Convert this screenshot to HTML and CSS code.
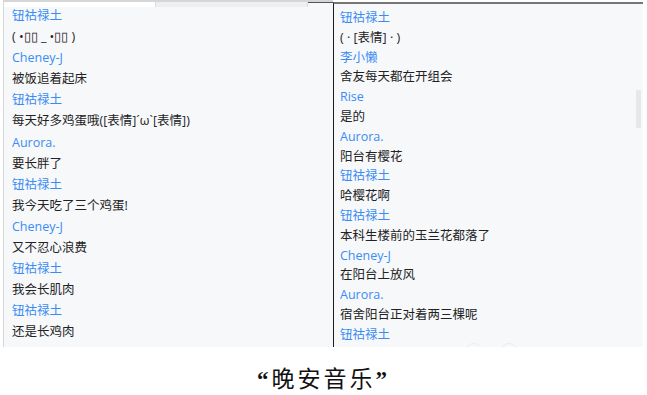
FILE: index.html
```html
<!DOCTYPE html>
<html lang="zh-CN">
<head>
    <meta charset="UTF-8">
    <meta name="viewport" content="width=device-width, initial-scale=1.0">
    <title>晚安音乐</title>
    <link rel="stylesheet" href="styles.css">
</head>
<body>
    <div class="figure">
        <div class="shots">
            <div class="panel panel-left">
                <div class="topbar">
                    <span class="tab tab-active"></span>
                    <span class="tab"></span>
                    <span class="tab tab-dark"></span>
                </div>
                <ul class="chat">
                    <li class="name">钮祜禄土</li>
                    <li class="msg">( •▯▯ _ •▯▯ )</li>
                    <li class="name">Cheney-J</li>
                    <li class="msg">被饭追着起床</li>
                    <li class="name">钮祜禄土</li>
                    <li class="msg">每天好多鸡蛋哦([表情]´ω`[表情])</li>
                    <li class="name">Aurora.</li>
                    <li class="msg">要长胖了</li>
                    <li class="name">钮祜禄土</li>
                    <li class="msg">我今天吃了三个鸡蛋!</li>
                    <li class="name">Cheney-J</li>
                    <li class="msg">又不忍心浪费</li>
                    <li class="name">钮祜禄土</li>
                    <li class="msg">我会长肌肉</li>
                    <li class="name">钮祜禄土</li>
                    <li class="msg">还是长鸡肉</li>
                </ul>
            </div>
            <div class="panel panel-right">
                <ul class="chat">
                    <li class="name">钮祜禄土</li>
                    <li class="msg">( · [表情] · )</li>
                    <li class="name">李小懒</li>
                    <li class="msg">舍友每天都在开组会</li>
                    <li class="name">Rise</li>
                    <li class="msg">是的</li>
                    <li class="name">Aurora.</li>
                    <li class="msg">阳台有樱花</li>
                    <li class="name">钮祜禄土</li>
                    <li class="msg">哈樱花啊</li>
                    <li class="name">钮祜禄土</li>
                    <li class="msg">本科生楼前的玉兰花都落了</li>
                    <li class="name">Cheney-J</li>
                    <li class="msg">在阳台上放风</li>
                    <li class="name">Aurora.</li>
                    <li class="msg">宿舍阳台正对着两三棵呢</li>
                    <li class="name">钮祜禄土</li>
                </ul>
                <div class="scroll-thumb"></div>
                <span class="round-btn btn-one"></span>
                <span class="round-btn btn-two"></span>
            </div>
        </div>
        <p class="caption"><span class="quote">“</span>晚安音乐<span class="quote">”</span></p>
    </div>
</body>
</html>
```

FILE: styles.css
```css
* {
    margin: 0;
    padding: 0;
    box-sizing: border-box;
}

body {
    background-color: #ffffff;
    font-family: "Open Sans", "Noto Sans CJK SC", sans-serif;
}

.figure {
    width: 647px;
    height: 395px;
}

.shots {
    display: flex;
    height: 347px;
}

.panel {
    position: relative;
    background-color: #f7f8fa;
}

.panel-left {
    width: 330px;
    margin-left: 3px;
    border-left: 1px solid #d8d8d8;
}

.topbar {
    display: flex;
    height: 7px;
    border-top: 2px solid #d6d6d6;
}

.tab {
    width: 152px;
    background-color: #eeeff1;
    border-right: 1px solid #dcdcdc;
}

.tab-active {
    background-color: #ffffff;
}

.tab-dark {
    flex: 1;
    background-color: #f7f8fa;
    border-top: 1px solid #555;
    border-right: none;
}

.panel-right {
    width: 310px;
    margin-top: 2px;
    border-left: 1px solid #1c1c1c;
    border-top: 2px solid #777;
    overflow: hidden;
}

.chat {
    list-style: none;
    font-size: 12.5px;
}

.panel-left .chat {
    padding-left: 8px;
    line-height: 21.1px;
    margin-top: -2px;
}

.panel-right .chat {
    padding-left: 6px;
    line-height: 19.8px;
    padding-top: 4px;
}

.name {
    color: #3a8cf4;
}

.msg {
    color: #222222;
}

.scroll-thumb {
    position: absolute;
    top: 86px;
    right: 2px;
    width: 5px;
    height: 38px;
    background-color: #e6e8eb;
}

.round-btn {
    position: absolute;
    top: 339px;
    width: 18px;
    height: 18px;
    border-radius: 50%;
    border: 1px solid #ececec;
    background: transparent;
}

.btn-one {
    left: 131px;
}

.btn-two {
    left: 166px;
}

.caption {
    margin-top: 16px;
    text-align: center;
    font-family: "Noto Sans CJK SC", sans-serif;
    font-size: 23px;
    line-height: 28px;
    color: #111;
    letter-spacing: 3px;
}

.quote {
    font-family: "Liberation Serif", serif;
    font-weight: bold;
}
```
